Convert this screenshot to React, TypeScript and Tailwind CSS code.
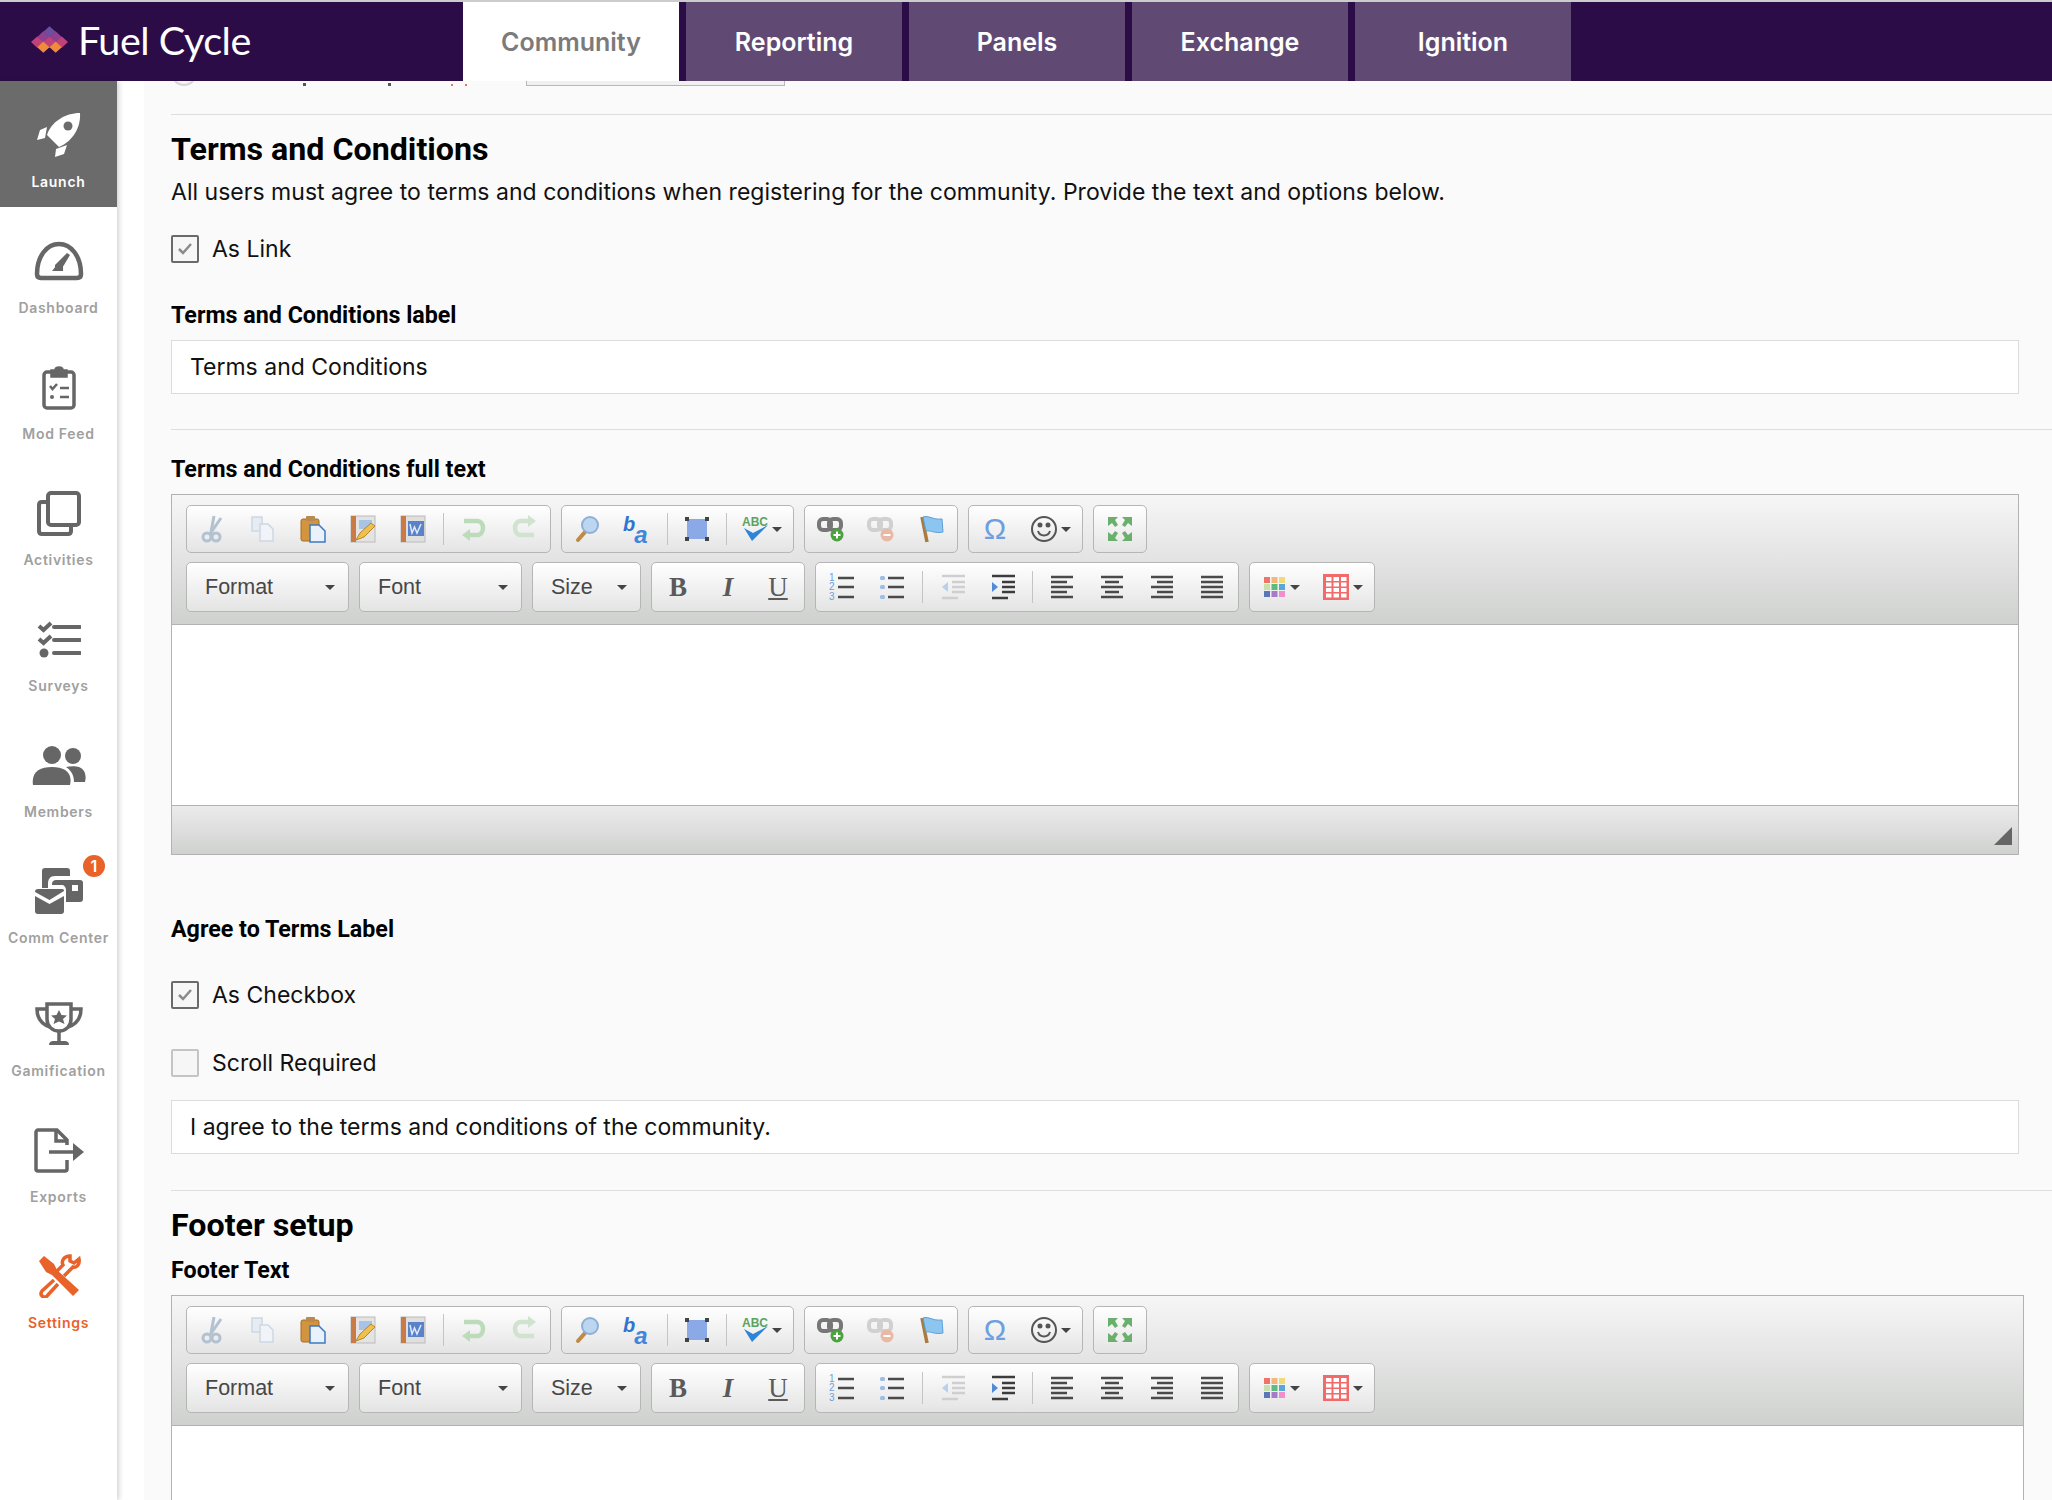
import React from "react";

const inter = "font-['Inter','Noto_Sans',sans-serif]";

/* ---------- sidebar icons ---------- */
function Rocket() {
  return (
    <svg width="44" height="44" viewBox="0 0 44 44">
      <path d="M43 0C28 0 14 9 10 22L22 34C36 28 44 14 43 0Z" fill="#fff" />
      <circle cx="31" cy="13" r="4.500" fill="#6b6b6b" />
      <path d="M10 14L3 17L0 27L8 25ZM30 32L27 41L18 44L19 36Z" fill="#fff" />
    </svg>
  );
}
function Gauge() {
  return (
    <svg width="50" height="40" viewBox="0 0 50 40" fill="none" stroke="#666" strokeWidth="4.500">
      <path d="M7 37H43C45.500 37 47 36 47 33C47 15 37 3 25 3C13 3 3 15 3 33C3 36 4.500 37 7 37Z" strokeLinejoin="round" />
      <path d="M21 29H27L36 14L33 12L21 24Z" fill="#666" stroke="none" />
      <path d="M18 30H29V25H22Z" fill="#666" stroke="none" />
    </svg>
  );
}
function Clipboard() {
  return (
    <svg width="34" height="45" viewBox="0 0 34 45" fill="none" stroke="#666" strokeWidth="3.500">
      <rect x="2" y="7" width="30" height="36" rx="3" />
      <path d="M9 5H13C13 1 21 1 21 5H25V12H9Z" fill="#666" strokeWidth="1.500" />
      <path d="M8 21L10.500 24L15 19" strokeWidth="2.500" />
      <path d="M18 23H27M18 32H27" strokeWidth="2.500" />
      <circle cx="10" cy="32" r="2" fill="#666" stroke="none" />
    </svg>
  );
}
function Layers() {
  return (
    <svg width="44" height="45" viewBox="0 0 44 45" fill="none" stroke="#666" strokeWidth="4">
      <rect x="11" y="2" width="31" height="32" rx="3" />
      <path d="M11 11H5C3 11 2 12 2 14V40C2 42 3 43 5 43H31C33 43 34 42 34 40V34" />
    </svg>
  );
}
function Checklist() {
  return (
    <svg width="44" height="38" viewBox="0 0 44 38" fill="none" stroke="#666" strokeWidth="4">
      <path d="M2 6L6.500 10L14 3M2 19L6.500 23L14 16" />
      <path d="M17 7H43M17 20H43M17 33H43" strokeLinecap="round" />
      <circle cx="7" cy="33" r="4.500" fill="#666" stroke="none" />
    </svg>
  );
}
function Members() {
  return (
    <svg width="54" height="39" viewBox="0 0 54 39" fill="#666">
      <circle cx="20" cy="9" r="9" />
      <path d="M1 39C-1 26 8 21 20 21C32 21 41 26 38 39Z" />
      <circle cx="41" cy="10" r="8" />
      <path d="M34 21C38 20 44 20 47 21C52 23 55 28 53 36H42C42 30 40 25 34 21Z" />
    </svg>
  );
}
function CommCenter() {
  return (
    <svg width="48" height="46" viewBox="0 0 48 46">
      <path d="M7 3C7 1 8 0 10 0H32C34 0 35 1 35 3V8H20C15 8 13 11 13 16V20H7Z" fill="#666" />
      <path d="M17 16C17 13 19 12 21 12H45C47 12 48 13 48 15V31C48 33 47 34 45 34H31V22C31 19 29 17 27 17H17Z" fill="#666" />
      <rect x="37" y="17" width="6" height="6" fill="#fff" />
      <path d="M0 24C0 22 1 21 3 21H27C29 21 29 22 29 23L14.500 32L0 24ZM0 28L14.500 36L29 28V43C29 45 28 46 26 46H3C1 46 0 45 0 43Z" fill="#666" />
    </svg>
  );
}
function Trophy() {
  return (
    <svg width="48" height="45" viewBox="0 0 48 45" fill="none" stroke="#666" strokeWidth="3.500">
      <path d="M12 2H36V17C36 24 31 29 24 29C17 29 12 24 12 17Z" />
      <path d="M12 7H2C2 16 6 22 15 25M36 7H46C46 16 42 22 33 25" />
      <path d="M24 29V40" />
      <path d="M14 43C14 40 16 39 18 39H30C32 39 34 40 34 43Z" fill="#666" stroke="none" />
      <path d="M24 8L26.500 13L32 13.500L28 17L29.500 22L24 19.500L18.500 22L20 17L16 13.500L21.500 13Z" fill="#666" stroke="none" />
    </svg>
  );
}
function Exports() {
  return (
    <svg width="50" height="45" viewBox="0 0 50 45" fill="none" stroke="#666" strokeWidth="3.500">
      <path d="M33 32V41C33 42.500 32 43 31 43H4C3 43 2 42.500 2 41V4C2 3 3 2 4 2H23L33 12V17" />
      <path d="M22 2V13H33" />
      <path d="M15 24H40" />
      <path d="M39 15L50 24L39 33Z" fill="#666" stroke="none" />
    </svg>
  );
}
function Tools() {
  return (
    <svg width="44" height="44" viewBox="0 0 44 44" fill="none" stroke="#e8622a">
      <path d="M2 7L7 2L17 10L20 16L42 36L36 42L15 21L9 18Z" fill="#e8622a" stroke="none" />
      <path d="M27 22L36 13C40 14 43 10 42 5L37 9L33 7L33 2C27 2 24 7 26 11L20 17M17 26L5 37C2 41 7 45 10 42L21 30" strokeWidth="3.500" />
    </svg>
  );
}

/* ---------- editor toolbar icons, 28 x 28 ---------- */
const Cut = () => (
  <svg width="28" height="28" viewBox="0 0 28 28" fill="none" stroke="#b2c2d0" strokeWidth="3">
    <path d="M15 1L12 17M22 3L11 19" />
    <circle cx="8" cy="22" r="4" />
    <circle cx="17" cy="22" r="4" />
  </svg>
);
const Copy = () => (
  <svg width="28" height="28" viewBox="0 0 28 28" fill="#e7ecf3" stroke="#cdd7e3" strokeWidth="1.500">
    <path d="M3 2H13V16H3Z" />
    <path d="M11 9H19L24 14V26H11Z" fill="#f0f3f7" />
  </svg>
);
const Paste = () => (
  <svg width="28" height="28" viewBox="0 0 28 28">
    <rect x="2" y="4" width="18" height="22" rx="2" fill="#d2943e" stroke="#a86d25" />
    <rect x="7" y="1" width="9" height="5" rx="1" fill="#b98a4f" />
    <path d="M11 10H20L26 16V27H11Z" fill="#e9f1fb" stroke="#3d7ac2" strokeWidth="1.500" />
  </svg>
);
const PasteText = () => (
  <svg width="28" height="28" viewBox="0 0 28 28">
    <rect x="2" y="1" width="24" height="26" fill="#e3e3e3" stroke="#bbb" />
    <rect x="2" y="1" width="5" height="26" fill="#c97a45" />
    <rect x="10" y="5" width="13" height="9" fill="#a7c4e6" />
    <path d="M7 25L11 18L22 8L26 11L15 22Z" fill="#efc04c" stroke="#b8862a" />
  </svg>
);
const PasteWord = () => (
  <svg width="28" height="28" viewBox="0 0 28 28">
    <rect x="2" y="1" width="24" height="26" fill="#dfdfdf" stroke="#bbb" />
    <rect x="2" y="1" width="5" height="26" fill="#c97a45" />
    <rect x="9" y="6" width="16" height="15" fill="#5a82c8" />
    <path d="M11 9L13 18L15.500 12L18 18L22 9" fill="none" stroke="#dfe9f8" strokeWidth="1.500" />
  </svg>
);
const Undo = () => (
  <svg width="28" height="28" viewBox="0 0 28 28" fill="none" stroke="#bcdcb9" strokeWidth="4.500">
    <path d="M4 6H17C25 6 25 20 17 20H8" />
    <path d="M10 14L2 20L10 26Z" fill="#bcdcb9" stroke="none" />
  </svg>
);
const Redo = () => (
  <svg width="28" height="28" viewBox="0 0 28 28" fill="none" stroke="#cfe3ce" strokeWidth="4.500">
    <path d="M24 20H11C3 20 3 6 11 6H20" />
    <path d="M18 0L26 6L18 12Z" fill="#cfe3ce" stroke="none" />
  </svg>
);
const Find = () => (
  <svg width="28" height="28" viewBox="0 0 28 28">
    <path d="M4 25L11 17" stroke="#c08a45" strokeWidth="4" strokeLinecap="round" />
    <circle cx="16" cy="10" r="8" fill="#bcd6f2" stroke="#8eb0d6" strokeWidth="2" />
  </svg>
);
const Replace = () => (
  <span className="flex w-[30px] h-[30px] font-['Liberation_Sans',sans-serif] italic font-bold leading-none">
    <span className="text-[20px] text-[#2f74cf]">b</span>
    <span className="mt-[9px] -ml-[1px] text-[24px] text-[#3f86dd]">a</span>
  </span>
);
const SelectAll = () => (
  <svg width="28" height="28" viewBox="0 0 28 28">
    <rect x="4" y="4" width="20" height="20" fill="#8aa9e6" />
    <g fill="#444">
      <rect x="2" y="2" width="4" height="4" />
      <rect x="22" y="2" width="4" height="4" />
      <rect x="2" y="22" width="4" height="4" />
      <rect x="22" y="22" width="4" height="4" />
    </g>
  </svg>
);
const Spell = () => (
  <svg width="28" height="28" viewBox="0 0 28 28">
    <text x="1" y="11" fontSize="12" fontWeight="700" fill="#5aa35f" fontFamily="'Liberation Sans',sans-serif">ABC</text>
    <path d="M3 13L11 26L27 10L12 18Z" fill="#2e84d6" />
  </svg>
);
const Link = () => (
  <svg width="28" height="28" viewBox="0 0 28 28">
    <rect x="2" y="4" width="12" height="11" rx="4" fill="none" stroke="#777" strokeWidth="4" />
    <rect x="12" y="4" width="12" height="11" rx="4" fill="none" stroke="#777" strokeWidth="4" />
    <circle cx="20" cy="20" r="6.500" fill="#4ba23f" />
    <path d="M20 16.500V23.500M16.500 20H23.500" stroke="#fff" strokeWidth="2" />
  </svg>
);
const Unlink = () => (
  <svg width="28" height="28" viewBox="0 0 28 28">
    <rect x="2" y="4" width="12" height="11" rx="4" fill="none" stroke="#d0d0d0" strokeWidth="4" />
    <rect x="12" y="4" width="12" height="11" rx="4" fill="none" stroke="#d0d0d0" strokeWidth="4" />
    <circle cx="20" cy="20" r="6.500" fill="#eab9a6" />
    <path d="M16.500 20H23.500" stroke="#fff" strokeWidth="2" />
  </svg>
);
const Anchor = () => (
  <svg width="28" height="28" viewBox="0 0 28 28">
    <path d="M5 2L10 27" stroke="#a87b3f" strokeWidth="3.500" />
    <path d="M6 2C12 0 15 5 25 4L26 17C18 19 14 15 9 16Z" fill="#8cc6f0" stroke="#5aa0d8" />
  </svg>
);
const Omega = () => (
  <span className="font-['Liberation_Sans',sans-serif] text-[30px] leading-none text-[#6d9fe0]">Ω</span>
);
const Smiley = () => (
  <svg width="28" height="28" viewBox="0 0 28 28" fill="none" stroke="#555" strokeWidth="2">
    <circle cx="14" cy="14" r="12" />
    <path d="M8 16C10 22 18 22 20 16" />
    <circle cx="10" cy="10" r="1.500" fill="#555" />
    <circle cx="18" cy="10" r="1.500" fill="#555" />
  </svg>
);
const Maximize = () => (
  <svg width="28" height="28" viewBox="0 0 28 28" fill="#6ab06c">
    <path d="M2 2H12L9 5L12 10L9 12L6 8L2 11ZM26 2H16L19 5L16 10L19 12L22 8L26 11ZM2 26H12L9 23L12 18L9 16L6 20L2 17ZM26 26H16L19 23L16 18L19 16L22 20L26 17Z" />
  </svg>
);
const Letter = ({ c, cls }: { c: string; cls: string }) => (
  <span className={`font-['Liberation_Serif',serif] text-[27px] leading-none text-[#5a5a5a] ${cls}`}>{c}</span>
);
const Bold = () => <Letter c="B" cls="font-bold" />;
const Italic = () => <Letter c="I" cls="font-bold italic" />;
const Underline = () => <Letter c="U" cls="underline decoration-2 underline-offset-2" />;
const OList = () => (
  <svg width="28" height="28" viewBox="0 0 28 28">
    <g stroke="#4a4a4a" strokeWidth="2.500">
      <path d="M10 5H26M10 14H26M10 24H26" />
    </g>
    <g fill="#6fa0dc" fontSize="10" fontFamily="'Liberation Sans',sans-serif">
      <text x="1" y="8">1</text>
      <text x="1" y="17">2</text>
      <text x="1" y="27">3</text>
    </g>
  </svg>
);
const UList = () => (
  <svg width="28" height="28" viewBox="0 0 28 28">
    <path d="M10 5H26M10 14H26M10 24H26" stroke="#4a4a4a" strokeWidth="2.500" />
    <g fill="#9dbde6">
      <rect x="2" y="3" width="5" height="4" rx="1.500" />
      <rect x="2" y="12" width="5" height="4" rx="1.500" />
      <rect x="2" y="22" width="5" height="4" rx="1.500" />
    </g>
  </svg>
);
const Outdent = () => (
  <svg width="28" height="28" viewBox="0 0 28 28" stroke="#cfcfcf" strokeWidth="2.500">
    <path d="M3 3H26M13 9H26M13 14H26M13 19H26M3 25H19" />
    <path d="M9 9L3 14L9 19Z" fill="#b9d0ec" stroke="none" />
  </svg>
);
const Indent = () => (
  <svg width="28" height="28" viewBox="0 0 28 28" stroke="#3c3c3c" strokeWidth="2.500">
    <path d="M3 3H26M13 9H26M13 14H26M13 19H26M3 25H19" />
    <path d="M3 9L9 14L3 19Z" fill="#4f8bd8" stroke="none" />
  </svg>
);
const AlignLeft = () => (
  <svg width="28" height="28" viewBox="0 0 28 28" stroke="#4a4a4a" strokeWidth="2.500">
    <path d="M3 4H25M3 9H19M3 14H25M3 19H19M3 24H25" />
  </svg>
);
const AlignCenter = () => (
  <svg width="28" height="28" viewBox="0 0 28 28" stroke="#4a4a4a" strokeWidth="2.500">
    <path d="M3 4H25M7 9H21M3 14H25M7 19H21M3 24H25" />
  </svg>
);
const AlignRight = () => (
  <svg width="28" height="28" viewBox="0 0 28 28" stroke="#4a4a4a" strokeWidth="2.500">
    <path d="M3 4H25M9 9H25M3 14H25M9 19H25M3 24H25" />
  </svg>
);
const Justify = () => (
  <svg width="28" height="28" viewBox="0 0 28 28" stroke="#4a4a4a" strokeWidth="2.500">
    <path d="M3 4H25M3 9H25M3 14H25M3 19H25M3 24H25" />
  </svg>
);
const Colors = () => (
  <svg width="24" height="24" viewBox="0 0 24 24">
    {["#ee7467", "#f2b878", "#f1d97d", "#c7e2a8", "#5dbb7e", "#5ba6d8", "#5a78b8", "#a97ac8", "#ef8fcb"].map((c, i) => (
      <rect key={c} x={1 + (i % 3) * 7.500} y={2 + Math.floor(i / 3) * 7} width="6" height="6" fill={c} />
    ))}
  </svg>
);
const Table = () => (
  <svg width="28" height="28" viewBox="0 0 28 28">
    <rect x="1" y="1" width="26" height="26" fill="#f26b6b" />
    {[0, 1, 2, 3].map((r) =>
      [0, 1, 2].map((c) => <rect key={`${r}-${c}`} x={4 + c * 7.500} y={4 + r * 5.500} width="5.500" height="4" fill="#fff" />)
    )}
  </svg>
);

/* ---------- editor parts ---------- */
function Caret() {
  return <span className="w-0 h-0 border-x-[5px] border-x-transparent border-t-[5px] border-t-[#444]" />;
}
function Btn({ icon: Icon, menu }: { icon: React.FC; menu?: boolean }) {
  return (
    <span className={`flex items-center justify-center gap-[3px] h-full ${menu ? "w-[61px]" : "w-[50px]"}`}>
      <Icon />
      {menu && <Caret />}
    </span>
  );
}
function Sep({ wide }: { wide?: boolean }) {
  return <span className={`w-px h-[32px] bg-[#c4c4c4] ${wide ? "mx-[5px]" : "mx-[4px]"}`} />;
}
function Group({ children }: { children: React.ReactNode }) {
  return (
    <div className="flex items-center px-px rounded-[5px] border border-[#b6b6b6] bg-gradient-to-b from-[#ffffff] to-[#e4e4e4]">
      {children}
    </div>
  );
}
function Combo({ label, className }: { label: string; className: string }) {
  return (
    <div className={`flex items-center justify-between pl-[18px] pr-[13px] rounded-[5px] border border-[#b6b6b6] bg-gradient-to-b from-[#ffffff] to-[#e4e4e4] ${className}`}>
      <span className="font-['Liberation_Sans',sans-serif] text-[21.500px] text-[#474747]">{label}</span>
      <Caret />
    </div>
  );
}
function Editor({ className }: { className: string }) {
  return (
    <div className={`mt-[11px] shrink-0 border border-[#b2b2b2] ${className}`}>
      <div className="h-[130px] pt-[10px] pl-[14px] bg-gradient-to-b from-[#f6f6f6] to-[#cfd1cf] border-b border-[#b2b2b2]">
        <div className="flex h-[48px] gap-[10px]">
          <Group>
            <Btn icon={Cut} /><Btn icon={Copy} /><Btn icon={Paste} /><Btn icon={PasteText} /><Btn icon={PasteWord} />
            <Sep wide />
            <Btn icon={Undo} /><Btn icon={Redo} />
          </Group>
          <Group>
            <Btn icon={Find} /><Btn icon={Replace} />
            <Sep />
            <Btn icon={SelectAll} />
            <Sep />
            <Btn icon={Spell} menu />
          </Group>
          <Group>
            <Btn icon={Link} /><Btn icon={Unlink} /><Btn icon={Anchor} />
          </Group>
          <Group>
            <Btn icon={Omega} /><Btn icon={Smiley} menu />
          </Group>
          <Group>
            <Btn icon={Maximize} />
          </Group>
        </div>
        <div className="flex h-[50px] gap-[10px] mt-[9px]">
          <Combo label="Format" className="w-[163px]" />
          <Combo label="Font" className="w-[163px]" />
          <Combo label="Size" className="w-[109px]" />
          <Group>
            <Btn icon={Bold} /><Btn icon={Italic} /><Btn icon={Underline} />
          </Group>
          <Group>
            <Btn icon={OList} /><Btn icon={UList} />
            <Sep wide />
            <Btn icon={Outdent} /><Btn icon={Indent} />
            <Sep />
            <Btn icon={AlignLeft} /><Btn icon={AlignCenter} /><Btn icon={AlignRight} /><Btn icon={Justify} />
          </Group>
          <Group>
            <Btn icon={Colors} menu /><Btn icon={Table} menu />
          </Group>
        </div>
      </div>
      <div className="h-[181px] bg-white border-b border-[#b2b2b2]" />
      <div className="flex items-start justify-end h-[48px] pt-[21px] pr-[6px] bg-gradient-to-b from-[#ebebeb] to-[#cfd1cf]">
        <span className="w-0 h-0 border-l-[18px] border-l-transparent border-b-[18px] border-b-[#666]" />
      </div>
    </div>
  );
}

/* ---------- form parts ---------- */
function Check({ label, checked, className }: { label: string; checked?: boolean; className: string }) {
  return (
    <label className={`flex items-center gap-[13px] h-[28px] shrink-0 ${className}`}>
      <span className={`flex items-center justify-center w-[28px] h-[28px] rounded-[2px] border-2 bg-[#f6f6f6] ${checked ? "border-[#6a6a6a]" : "border-[#c4c4c4]"}`}>
        {checked && (
          <svg width="16" height="14" viewBox="0 0 16 14" fill="none" stroke="#8a8a8a" strokeWidth="2.500">
            <path d="M2 7L6 11L14 2" />
          </svg>
        )}
      </span>
      <span className="pt-px text-[23px] text-[#111]">{label}</span>
    </label>
  );
}
function TextField({ value, className }: { value: string; className: string }) {
  return (
    <div className={`flex items-center shrink-0 w-[1848px] h-[54px] px-[18px] pt-px bg-white border border-[#dcdcdc] text-[23px] text-[#111] ${className}`}>
      {value}
    </div>
  );
}
function Label({ children, className }: { children: React.ReactNode; className: string }) {
  return <div className={`font-['Roboto',sans-serif] text-[23.250px] leading-[28px] font-bold text-black ${className}`}>{children}</div>;
}
function Heading({ children }: { children: React.ReactNode }) {
  return <h2 className="mt-[14px] font-['Roboto',sans-serif] text-[32.200px] leading-[40px] font-bold text-black">{children}</h2>;
}

const navItems = [
  { label: "Dashboard", icon: <Gauge /> },
  { label: "Mod Feed", icon: <Clipboard /> },
  { label: "Activities", icon: <Layers /> },
  { label: "Surveys", icon: <Checklist /> },
  { label: "Members", icon: <Members /> },
];

function NavItem({ label, icon, className = "h-[126px] text-[#a0a0a0]" }: { label: string; icon: React.ReactNode; className?: string }) {
  return (
    <div className={`relative flex flex-col items-center pt-[28px] ${className}`}>
      <div className="flex items-center justify-center h-[52px]">{icon}</div>
      <span className="mt-[12px] text-[14px] leading-[18px] font-semibold tracking-[0.7px] whitespace-nowrap">{label}</span>
    </div>
  );
}

const tabs = ["Reporting", "Panels", "Exchange", "Ignition"];

export default function App() {
  return (
    <div className={`flex flex-col h-[1500px] overflow-hidden bg-white ${inter}`}>
      {/* top bar */}
      <header className="flex shrink-0 h-[81px] border-t-2 border-[#cccccc] bg-[#2c0c47]">
        <div className="flex items-center w-[463px] pl-[31px] pb-[4px]">
          <svg width="37" height="27" viewBox="0 0 36 26">
            <path d="M18 0L24 5.500L18 11L12 5.500Z" fill="#6a4fa3" />
            <path d="M12 5L18 10.500L12 16L6 10.500ZM24 5L30 10.500L24 16L18 10.500Z" fill="#8f408f" />
            <path d="M6 10L12 15.500L6 21L0 15.500ZM18 10L24 15.500L18 21L12 15.500ZM30 10L36 15.500L30 21L24 15.500Z" fill="#c2417a" />
            <path d="M12 15L18 20.500L12 26L6 20.500ZM24 15L30 20.500L24 26L18 20.500Z" fill="#f08a3c" />
          </svg>
          <span className="ml-[10px] font-['Lato',sans-serif] font-normal text-[39.500px] leading-none text-white tracking-[-0.5px]">Fuel Cycle</span>
        </div>
        <div className="flex items-center justify-center w-[216px] pt-[3px] bg-white text-[25px] font-semibold text-[#7b7b7b]">Community</div>
        <div className="flex ml-[7px] gap-[7px]">
          {tabs.map((t) => (
            <div key={t} className="flex items-center justify-center w-[216px] pt-[3px] bg-[#604a73] text-[25px] font-semibold text-white">
              {t}
            </div>
          ))}
        </div>
      </header>

      <div className="flex flex-1 min-h-0">
        {/* left rail */}
        <aside className="shrink-0 w-[117px] bg-white shadow-[2px_0_5px_rgba(0,0,0,0.18)] z-10">
          <NavItem label="Launch" icon={<Rocket />} className="h-[126px] bg-[#6b6b6b] text-white" />
          {navItems.map((n) => (
            <NavItem key={n.label} label={n.label} icon={n.icon} />
          ))}
          <NavItem
            label="Comm Center"
            className="h-[133px] text-[#a0a0a0]"
            icon={
              <>
                <CommCenter />
                <span className="absolute left-[83px] top-[18px] flex items-center justify-center w-[22px] h-[22px] rounded-full bg-[#e8622a] text-[16px] leading-none font-semibold text-white">1</span>
              </>
            }
          />
          <NavItem label="Gamification" icon={<Trophy />} />
          <NavItem label="Exports" icon={<Exports />} />
          <NavItem label="Settings" icon={<Tools />} className="h-[126px] text-[#e8622a]" />
        </aside>

        {/* content */}
        <main className="flex-1 min-w-0 pl-[27px] bg-white">
          <div className="flex flex-col pl-[27px] bg-[#fafafa]">
            {/* bottom edge of the row scrolled away under the top bar */}
            <div className="flex items-end h-[5px] overflow-hidden shrink-0">
              <span className="w-[26px] h-[26px] rounded-full border-2 border-[#d6d6d6] bg-[#f6f6f6]" />
              <span className="ml-[106px] w-[3px] h-[3px] bg-[#555]" />
              <span className="ml-[82px] w-[3px] h-[3px] bg-[#555]" />
              <span className="ml-[60px] w-[2px] h-[2px] bg-[#e07a50]" />
              <span className="ml-[12px] w-[2px] h-[2px] bg-[#e07a50]" />
              <span className="ml-[59px] w-[259px] h-[30px] border border-[#b8b8b8] bg-[#f0f0f0]" />
            </div>
            <hr className="mt-[28px] border-[#dedede]" />
            <Heading>Terms and Conditions</Heading>
            <p className="mt-[7px] text-[23px] leading-[32px] tracking-[0.02px] text-[#111]">
              All users must agree to terms and conditions when registering for the community. Provide the text and options below.
            </p>
            <Check label="As Link" checked className="mt-[27px]" />
            <Label className="mt-[38px]">Terms and Conditions label</Label>
            <TextField value="Terms and Conditions" className="mt-[11px]" />
            <hr className="mt-[35px] border-[#dedede]" />
            <Label className="mt-[25px]">Terms and Conditions full text</Label>
            <Editor className="w-[1848px]" />
            <Label className="mt-[60px]">Agree to Terms Label</Label>
            <Check label="As Checkbox" checked className="mt-[38px]" />
            <Check label="Scroll Required" className="mt-[40px]" />
            <TextField value="I agree to the terms and conditions of the community." className="mt-[23px]" />
            <hr className="mt-[36px] border-[#dedede]" />
            <Heading>Footer setup</Heading>
            <Label className="mt-[11px]">Footer Text</Label>
            <Editor className="w-[1853px]" />
          </div>
        </main>
      </div>
    </div>
  );
}
